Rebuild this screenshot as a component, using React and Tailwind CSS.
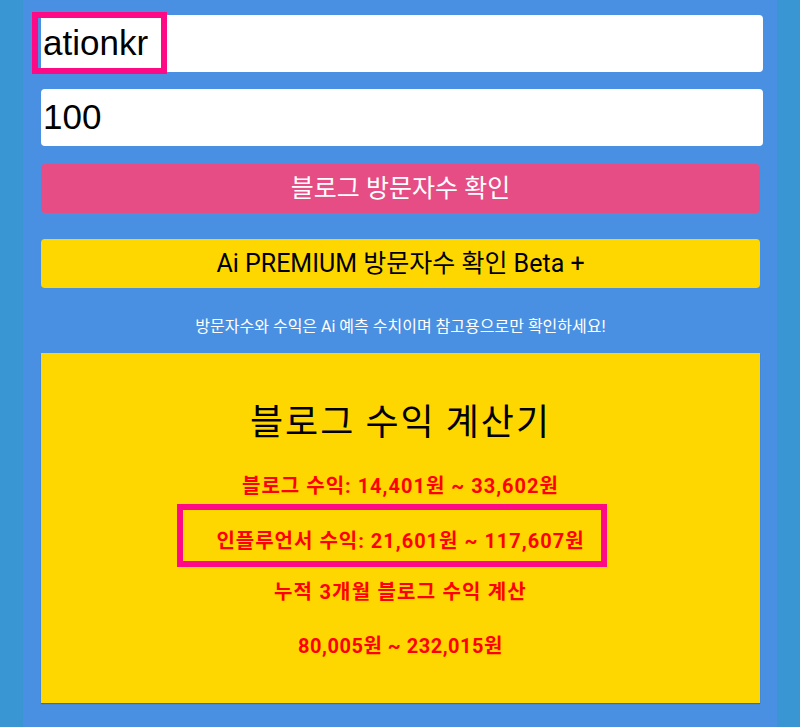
export default function App() {
  return (
    <div className="min-h-[727px] bg-[#3a96d3] px-[23px] font-['Roboto','Noto_Sans_CJK_KR',sans-serif]">
      <div className="bg-[#4a90e2] min-h-[727px] pl-[18px] pr-[15px] pt-[15px]">
        {/* inputs */}
        <div className="relative">
          <div className="h-[57px] w-[722px] bg-white rounded-[4px] flex items-center pl-[2px] text-[35px] text-black font-['Liberation_Sans',sans-serif]">
            ationkr
          </div>
          <div className="absolute left-[-9px] top-[-3px] w-[135px] h-[62px] border-[6px] border-[#ff0a86]" />
        </div>
        <div className="mt-[17px] h-[57px] w-[722px] bg-white rounded-[4px] flex items-center pl-[2px] text-[35px] text-black font-['Liberation_Sans',sans-serif]">
          100
        </div>

        {/* buttons */}
        <div className="mt-[18px] h-[49px] w-[719px] bg-[#e64d85] rounded-[4px] flex items-center justify-center text-white text-[25px]">
          블로그 방문자수 확인
        </div>
        <div className="mt-[26px] h-[49px] w-[719px] bg-[#ffd700] rounded-[4px] flex items-center justify-center text-black text-[25px]">
          Ai PREMIUM 방문자수 확인 Beta +
        </div>

        <p className="mt-[27px] text-center text-white text-[16px] w-[719px]">
          방문자수와 수익은 Ai 예측 수치이며 참고용으로만 확인하세요!
        </p>

        {/* calculator card */}
        <div className="mt-[14px] w-[719px] h-[350px] bg-[#ffd700] shadow-[0_1px_1px_rgba(0,0,0,0.25)] flex flex-col items-center pt-[42px]">
          <h2 className="text-[36px] tracking-[2px] text-black font-['Noto_Sans_CJK_KR',sans-serif] leading-[48px]">블로그 수익 계산기</h2>
          <div className="mt-[30px] text-[#ff0000] font-bold text-[20px] tracking-[1px] leading-[26px]">
            블로그 수익: 14,401원 ~ 33,602원
          </div>
          <div className="relative mt-[29px] w-full text-center text-[#ff0000] font-bold text-[20px] tracking-[1px] leading-[26px]">
            인플루언서 수익: 21,601원 ~ 117,607원
            <div className="absolute left-[136px] top-[-24px] w-[430px] h-[63px] border-[6px] border-[#ff0a86]" />
          </div>
          <div className="mt-[25px] text-[#ff0000] font-bold text-[20px] tracking-[1.2px] leading-[26px]">
            누적 3개월 블로그 수익 계산
          </div>
          <div className="mt-[28px] text-[#ff0000] font-bold text-[20px] tracking-[0.5px] leading-[26px]">
            80,005원 ~ 232,015원
          </div>
        </div>
      </div>
    </div>
  );
}
